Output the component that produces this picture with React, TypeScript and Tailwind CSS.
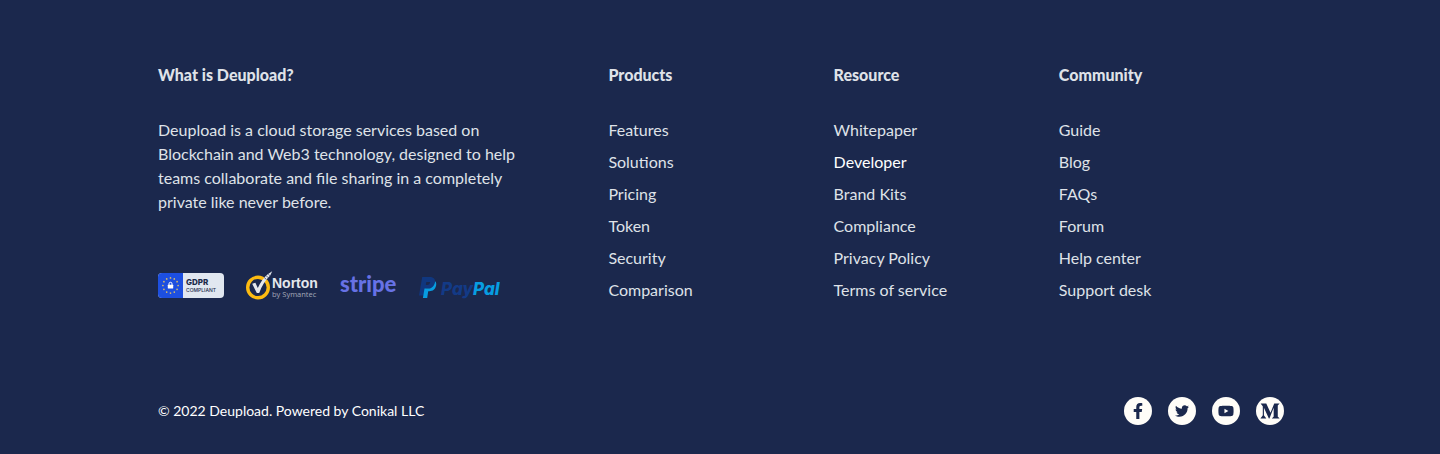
import { FaFacebookF, FaMediumM, FaTwitter, FaYoutube } from "react-icons/fa";

type LinkGroup = { title: string; links: string[] };

const groups: LinkGroup[] = [
  { title: "Products", links: ["Features", "Solutions", "Pricing", "Token", "Security", "Comparison"] },
  {
    title: "Resource",
    links: ["Whitepaper", "Developer", "Brand Kits", "Compliance", "Privacy Policy", "Terms of service"],
  },
  { title: "Community", links: ["Guide", "Blog", "FAQs", "Forum", "Help center", "Support desk"] },
];

const socials = [
  { label: "Facebook", icon: <FaFacebookF className="size-4" /> },
  { label: "Twitter", icon: <FaTwitter className="size-3.5" /> },
  { label: "YouTube", icon: <FaYoutube className="size-4" /> },
  { label: "Medium", icon: <FaMediumM className="size-5" /> },
];

const stars = Array.from({ length: 12 }, (_, i) => {
  const angle = (i * Math.PI) / 6;
  return { x: 12.5 + 7.6 * Math.sin(angle), y: 12.5 - 7.6 * Math.cos(angle) };
});

function GdprBadge() {
  return (
    <svg width="66" height="25" viewBox="0 0 66 25" role="img" aria-label="GDPR compliant">
      <rect width="66" height="25" rx="4" fill="#e1e7f0" />
      <path d="M4 0H25v25H4a4 4 0 0 1-4-4V4a4 4 0 0 1 4-4Z" fill="#1d4fe0" />
      {stars.map((s, i) => (
        <circle key={i} cx={s.x} cy={s.y} r="0.85" fill="#d9bd6a" />
      ))}
      <path d="M11 12v-1.200a1.500 1.500 0 0 1 3 0V12" fill="none" stroke="#fff" strokeWidth="1" />
      <rect x="9.800" y="11.800" width="5.400" height="3.700" rx="0.500" fill="#fff" />
      <text x="28" y="12" fontSize="8" fontWeight="800" fontFamily="Inter, sans-serif" fill="#1b2a4a">
        GDPR
      </text>
      <text x="28" y="19" fontSize="5" fontWeight="500" fontFamily="Inter, sans-serif" fill="#1b2a4a">
        COMPLIANT
      </text>
    </svg>
  );
}

function NortonLogo() {
  return (
    <svg width="72" height="29" viewBox="0 0 72 29" role="img" aria-label="Norton by Symantec">
      <circle cx="12" cy="16.500" r="10.300" fill="none" stroke="#fdbb11" strokeWidth="3.400" />
      <path
        d="M6.200 12.800 9.400 11.800l2.400 5.200C14.300 11.500 17.700 6.500 21.700 3.200L26.200.3 24.200 4.600C19.200 9.500 15.700 15 13.200 22H10.800Z"
        fill="#e4e7ec"
      />
      <path d="m18.200 6.500 2.200 2M20.200 4.700l2 2M22.200 3l1.700 1.700" stroke="#1b284d" strokeWidth="0.700" />
      <text x="26" y="17" fontSize="14" fontWeight="700" fontFamily="Liberation Sans, sans-serif" fill="#e4e7ec">
        Norton
      </text>
      <text x="26" y="26" fontSize="7.500" fontFamily="Open Sans, sans-serif" fill="#a4a9b8">
        by Symantec
      </text>
    </svg>
  );
}

function StripeLogo() {
  return (
    <svg width="57" height="29" viewBox="0 0 57 29" role="img" aria-label="Stripe">
      <text x="0" y="21" fontSize="22" fontWeight="900" fontFamily="Lato, sans-serif" fill="#6772e5">
        stripe
      </text>
    </svg>
  );
}

function PayPalLogo() {
  return (
    <svg width="84" height="29" viewBox="0 0 84 29" role="img" aria-label="PayPal">
      <path d="M3.200 6h7.600c3.800 0 5.800 2.200 5.200 5.600-.7 4-3.400 5.900-7.100 5.900H6.800L5.600 24.500H0Z" fill="#10377f" />
      <path
        d="M16.200 10.200c1 1 1.300 2.600.9 4.400-.8 3.900-3.200 5.700-6.700 5.700H9.200L8.200 27H3.900L5.500 17.500H8.900c4 0 6.400-2.200 7.300-7.300Z"
        fill="#079de2"
      />
      <path d="M7.300 11h3.900c-.3 2-1.500 2.900-3.200 2.900H6.800Z" fill="#1b284d" />
      <text
        x="22"
        y="24"
        fontSize="17"
        fontWeight="800"
        fontStyle="italic"
        fontFamily="Inter, sans-serif"
        fill="#133a86"
      >
        Pay<tspan fill="#079de2">Pal</tspan>
      </text>
    </svg>
  );
}

export default function App() {
  return (
    <footer className="bg-[#1b284d] px-6 pt-[63px] pb-[29px] font-['Lato',sans-serif] text-base leading-6 text-[#dfe2e8]">
      <div className="mx-auto max-w-[1128px] pl-0.5">
        <div className="grid grid-cols-2 gap-y-10 md:grid-cols-[2fr_1fr_1fr_1fr]">
          <section className="col-span-2 md:col-span-1">
            <h2 className="font-black">What is Deupload?</h2>
            <p className="mt-[31px] max-w-[368px]">
              Deupload is a cloud storage services based on Blockchain and Web3 technology, designed to help teams
              collaborate and file sharing in a completely private like never before.
            </p>
            <div className="mt-[57px] flex flex-wrap items-center gap-[22px]">
              <GdprBadge />
              <NortonLogo />
              <StripeLogo />
              <PayPalLogo />
            </div>
          </section>
          {groups.map((group) => (
            <nav key={group.title} aria-label={group.title}>
              <h2 className="font-black">{group.title}</h2>
              <ul className="mt-[31px] flex flex-col gap-2">
                {group.links.map((link) => (
                  <li key={link}>
                    <a href="#" className={link === "Developer" ? "text-white" : "hover:text-white"}>
                      {link}
                    </a>
                  </li>
                ))}
              </ul>
            </nav>
          ))}
        </div>
        <div className="mt-[95px] flex flex-wrap items-center justify-between gap-4">
          <p className="text-sm text-white">© 2022 Deupload. Powered by Conikal LLC</p>
          <ul className="flex gap-4">
            {socials.map((social) => (
              <li key={social.label}>
                <a
                  href="#"
                  aria-label={social.label}
                  className="flex size-7 items-center justify-center rounded-full bg-[#fffdf8] text-[#1b284d]"
                >
                  {social.icon}
                </a>
              </li>
            ))}
          </ul>
        </div>
      </div>
    </footer>
  );
}
